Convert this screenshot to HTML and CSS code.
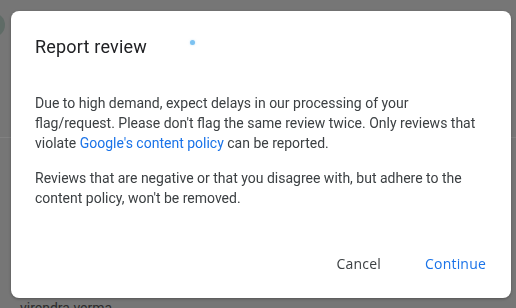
FILE: index.html
```html
<!DOCTYPE html>
<html lang="en">
<head>
    <meta charset="UTF-8">
    <meta name="viewport" content="width=device-width, initial-scale=1.0">
    <title>Report review</title>
    <link rel="stylesheet" href="styles.css">
</head>
<body>
    <!-- page behind the scrim -->
    <div class="page">
        <div class="review-head">
            <div class="avatar"></div>
        </div>
        <div class="divider"></div>
        <div class="reviewer">virendra verma</div>
    </div>

    <div class="dialog" role="dialog">
        <h2 class="dialog-title">Report review</h2>
        <span class="loading-dot"></span>
        <div class="dialog-body">
            <p>Due to high demand, expect delays in our processing of your flag/request. Please don't flag the same review twice. Only reviews that violate <a href="#">Google's content policy</a> can be reported.</p>
            <p>Reviews that are negative or that you disagree with, but adhere to the content policy, won't be removed.</p>
        </div>
        <div class="dialog-actions">
            <button class="btn">Cancel</button>
            <button class="btn primary">Continue</button>
        </div>
    </div>
</body>
</html>
```

FILE: styles.css
```css
body {
    margin: 0;
    background-color: #767676;
    font-family: Roboto, "Liberation Sans", Arial, sans-serif;
    height: 308px;
    overflow: hidden;
}
.page {
    display: flex;
    flex-direction: column;
    height: 308px;
}
.review-head {
    padding-top: 13px;
    height: 124px;
}
.avatar {
    width: 24px;
    height: 24px;
    margin-left: -19px;
    border-radius: 50%;
    background-color: #5f6b66;
}
.divider {
    height: 1px;
    background-color: #818181;
}
.reviewer {
    margin-top: auto;
    padding-left: 20px;
    font-size: 14px;
    line-height: 16px;
    height: 8px;
    color: #2c2c2c;
}
.dialog {
    position: fixed;
    left: 11px;
    top: 11px;
    width: 500px;
    height: 287px;
    box-sizing: border-box;
    background-color: #fff;
    border-radius: 8px;
    display: flex;
    flex-direction: column;
    box-shadow: 0 1px 3px rgba(0, 0, 0, 0.3);
}
.dialog-title {
    margin: 0;
    padding: 24px 24px 0;
    font-size: 18px;
    font-weight: 400;
    line-height: 24px;
    letter-spacing: 0.2px;
    color: #202124;
}
.loading-dot {
    position: absolute;
    left: 179px;
    top: 29px;
    width: 5px;
    height: 5px;
    border-radius: 50%;
    background-color: #7cc2f1;
    box-shadow: 0 0 2px rgba(124, 194, 241, 0.5);
}
.dialog-body {
    padding: 34px 24px 0;
    font-size: 14px;
    line-height: 20px;
    color: #3c4043;
}
.dialog-body p {
    margin: 0 0 15px;
}
.dialog-body a {
    color: #1a73e8;
    text-decoration: none;
}
.dialog-actions {
    margin-top: auto;
    display: flex;
    justify-content: flex-end;
    gap: 20px;
    padding: 0 13px 17px;
}
.btn {
    height: 36px;
    padding: 0 12px;
    border: none;
    background: none;
    border-radius: 4px;
    font-family: "Open Sans", Roboto, sans-serif;
    font-size: 14px;
    font-weight: 500;
    letter-spacing: 0.2px;
    color: #3c4043;
    cursor: pointer;
}
.btn.primary {
    color: #1a73e8;
}
```
